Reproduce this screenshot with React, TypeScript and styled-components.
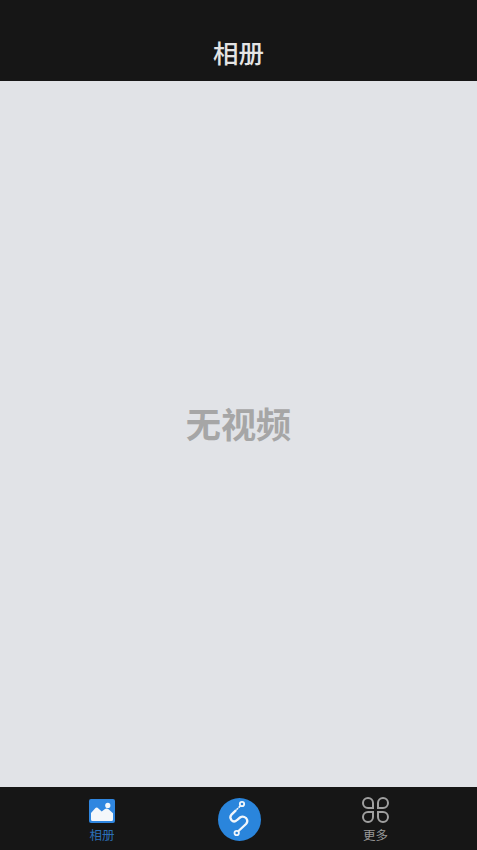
import React from "react";
import styled, { createGlobalStyle } from "styled-components";

const GlobalStyle = createGlobalStyle`
  html, body {
    margin: 0;
    padding: 0;
    background: #e1e3e7;
    font-family: "Noto Sans CJK SC", "Liberation Sans", sans-serif;
  }
`;

const Screen = styled.div`
  width: 477px;
  height: 850px;
  display: flex;
  flex-direction: column;
  overflow: hidden;
`;

const Header = styled.header`
  height: 81px;
  box-sizing: border-box;
  padding-top: 34px;
  background: #161616;
  display: flex;
  justify-content: center;
  flex-shrink: 0;
`;

const Title = styled.h1`
  margin: 0;
  font-size: 25.5px;
  line-height: 36px;
  font-weight: 500;
  color: #e4e4e4;
`;

const Content = styled.main`
  flex: 1;
  background: #e1e3e7;
  display: flex;
  align-items: center;
  justify-content: center;
  padding-bottom: 22px;
`;

const Empty = styled.p`
  margin: 0;
  font-size: 35.2px;
  line-height: 50px;
  font-weight: 700;
  color: #a6a6a6;
`;

const TabBar = styled.nav`
  height: 63px;
  flex-shrink: 0;
  background: #161616;
  display: grid;
  grid-template-columns: 136px 139px 133px;
  padding-left: 34px;
`;

const Tab = styled.div`
  display: flex;
  flex-direction: column;
  align-items: center;
  padding-top: 10px;
`;

const IconSlot = styled.div`
  height: 26px;
  display: flex;
  align-items: flex-end;
`;

const TabLabel = styled.span<{ active?: boolean }>`
  font-size: 12.5px;
  line-height: 18px;
  margin-top: 3px;
  color: ${(props) => (props.active ? "#2b6fb5" : "#9a9a9a")};
`;

const RoundButton = styled.div`
  width: 43px;
  height: 43px;
  margin-top: 1px;
  border-radius: 50%;
  background: #2a85dc;
  display: flex;
  align-items: center;
  justify-content: center;
`;

const AlbumIcon = () => (
  <svg width="26" height="24" viewBox="0 0 26 24">
    <rect x="0" y="0" width="26" height="24" rx="2" fill="#2f86e0" />
    <path
      d="M2 14 L6 9.4 Q7.7 7.6 9.4 9.4 L12.7 12.6 L16 10 Q17.8 8.8 19.6 10.2 L24 14.2 L24 20.5 Q24 22 22.5 22 L3.5 22 Q2 22 2 20.5 Z"
      fill="#f4f7fb"
    />
    <circle cx="18.8" cy="6.4" r="2.6" fill="#f4f7fb" />
  </svg>
);

const LinkIcon = () => (
  <svg width="43" height="43" viewBox="0 0 43 43" fill="none" stroke="#f2f6fb" strokeLinecap="round">
    <circle cx="24" cy="6" r="2.2" strokeWidth="1.8" />
    <path d="M21.8 8.4 L18.6 11.6" strokeWidth="1.6" strokeDasharray="1 2" />
    <path
      d="M17.6 12.6 L13.5 16.6 Q11.2 19.2 13.4 22 Q16 25 19 22 L22 19.5 Q25 17.4 28 20 Q30.6 23 28 26 L20.5 33"
      strokeWidth="2.3"
    />
    <circle cx="18.7" cy="35" r="2.2" strokeWidth="1.8" />
  </svg>
);

const MoreIcon = () => (
  <svg width="27" height="26" viewBox="0 0 27 26" fill="none" stroke="#a0a0a0" strokeWidth="2">
    <path d="M11 11 H6 A5 5 0 1 1 11 6 Z" />
    <path d="M16 11 H21 A5 5 0 1 0 16 6 Z" />
    <path d="M11 15 H6 A5 5 0 1 0 11 20 Z" />
    <path d="M16 15 H21 A5 5 0 1 1 16 20 Z" />
  </svg>
);

const App: React.FC = () => {
  return (
    <Screen>
      <GlobalStyle />
      <Header>
        <Title>相册</Title>
      </Header>
      <Content>
        <Empty>无视频</Empty>
      </Content>
      <TabBar>
        <Tab>
          <IconSlot>
            <AlbumIcon />
          </IconSlot>
          <TabLabel active>相册</TabLabel>
        </Tab>
        <Tab>
          <RoundButton>
            <LinkIcon />
          </RoundButton>
        </Tab>
        <Tab>
          <IconSlot>
            <MoreIcon />
          </IconSlot>
          <TabLabel>更多</TabLabel>
        </Tab>
      </TabBar>
    </Screen>
  );
};

export default App;
